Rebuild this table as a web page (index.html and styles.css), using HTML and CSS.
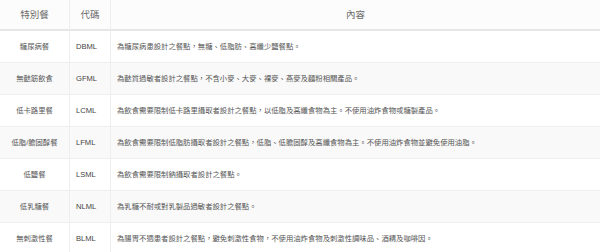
FILE: index.html
```html
<!DOCTYPE html>
<html lang="zh-Hant">
<head>
<meta charset="utf-8">
<link rel="stylesheet" href="styles.css">
</head>
<body>
<table class="meal-table">
  <colgroup>
    <col class="c-name">
    <col class="c-code">
    <col class="c-desc">
  </colgroup>
  <thead>
    <tr>
      <th>特別餐</th>
      <th>代碼</th>
      <th>內容</th>
    </tr>
  </thead>
  <tbody>
    <tr>
      <td class="name">糖尿病餐</td>
      <td class="code">DBML</td>
      <td class="desc">為糖尿病患設計之餐點，無糖、低脂肪、高纖少鹽餐點。</td>
    </tr>
    <tr class="alt">
      <td class="name">無麩筋飲食</td>
      <td class="code">GFML</td>
      <td class="desc">為麩質過敏者設計之餐點，不含小麥、大麥、裸麥、燕麥及麵粉相關產品。</td>
    </tr>
    <tr>
      <td class="name">低卡路里餐</td>
      <td class="code">LCML</td>
      <td class="desc">為飲食需要限制低卡路里攝取者設計之餐點，以低脂及高纖食物為主。不使用油炸食物或糖製產品。</td>
    </tr>
    <tr class="alt">
      <td class="name">低脂/膽固醇餐</td>
      <td class="code">LFML</td>
      <td class="desc">為飲食需要限制低脂肪攝取者設計之餐點，低脂、低膽固醇及高纖食物為主。不使用油炸食物並避免使用油脂。</td>
    </tr>
    <tr>
      <td class="name">低鹽餐</td>
      <td class="code">LSML</td>
      <td class="desc">為飲食需要限制鈉攝取者設計之餐點。</td>
    </tr>
    <tr class="alt">
      <td class="name">低乳糖餐</td>
      <td class="code">NLML</td>
      <td class="desc">為乳糖不耐或對乳製品過敏者設計之餐點。</td>
    </tr>
    <tr>
      <td class="name">無刺激性餐</td>
      <td class="code">BLML</td>
      <td class="desc">為腸胃不適患者設計之餐點，避免刺激性食物，不使用油炸食物及刺激性調味品、酒精及咖啡因。</td>
    </tr>
  </tbody>
</table>
</body>
</html>
```

FILE: styles.css
```css
html, body {
  margin: 0;
  padding: 0;
  background: #ffffff;
}

body {
  font-family: "Liberation Sans", "Noto Sans CJK TC", sans-serif;
  color: #555555;
}

.meal-table {
  width: 600px;
  border-collapse: separate;
  border-spacing: 0;
  table-layout: fixed;
}

.c-name { width: 70px; }
.c-code { width: 41px; }
.c-desc { width: 489px; }

.meal-table th {
  height: 29px;
  padding: 0;
  font-size: 9.5px;
  line-height: 12px;
  font-weight: normal;
  color: #6a6a6a;
  text-align: center;
  background: #fcfcfc;
  border-right: 1px solid #eeeeee;
  border-bottom: 2px solid #e6e6e6;
}

.meal-table td {
  height: 31px;
  padding: 0 6px;
  font-size: 7.35px;
  line-height: 10px;
  color: #555555;
  border-right: 1px solid #eeeeee;
  border-bottom: 1px solid #eeeeee;
  white-space: nowrap;
}

.meal-table th:last-child,
.meal-table td:last-child {
  border-right: none;
}

.meal-table td.name {
  text-align: center;
  padding: 0 2px;
}

.meal-table td.code {
  font-size: 7.6px;
  color: #444444;
}

.meal-table tr.alt td {
  background: #f9f9f9;
}
```
